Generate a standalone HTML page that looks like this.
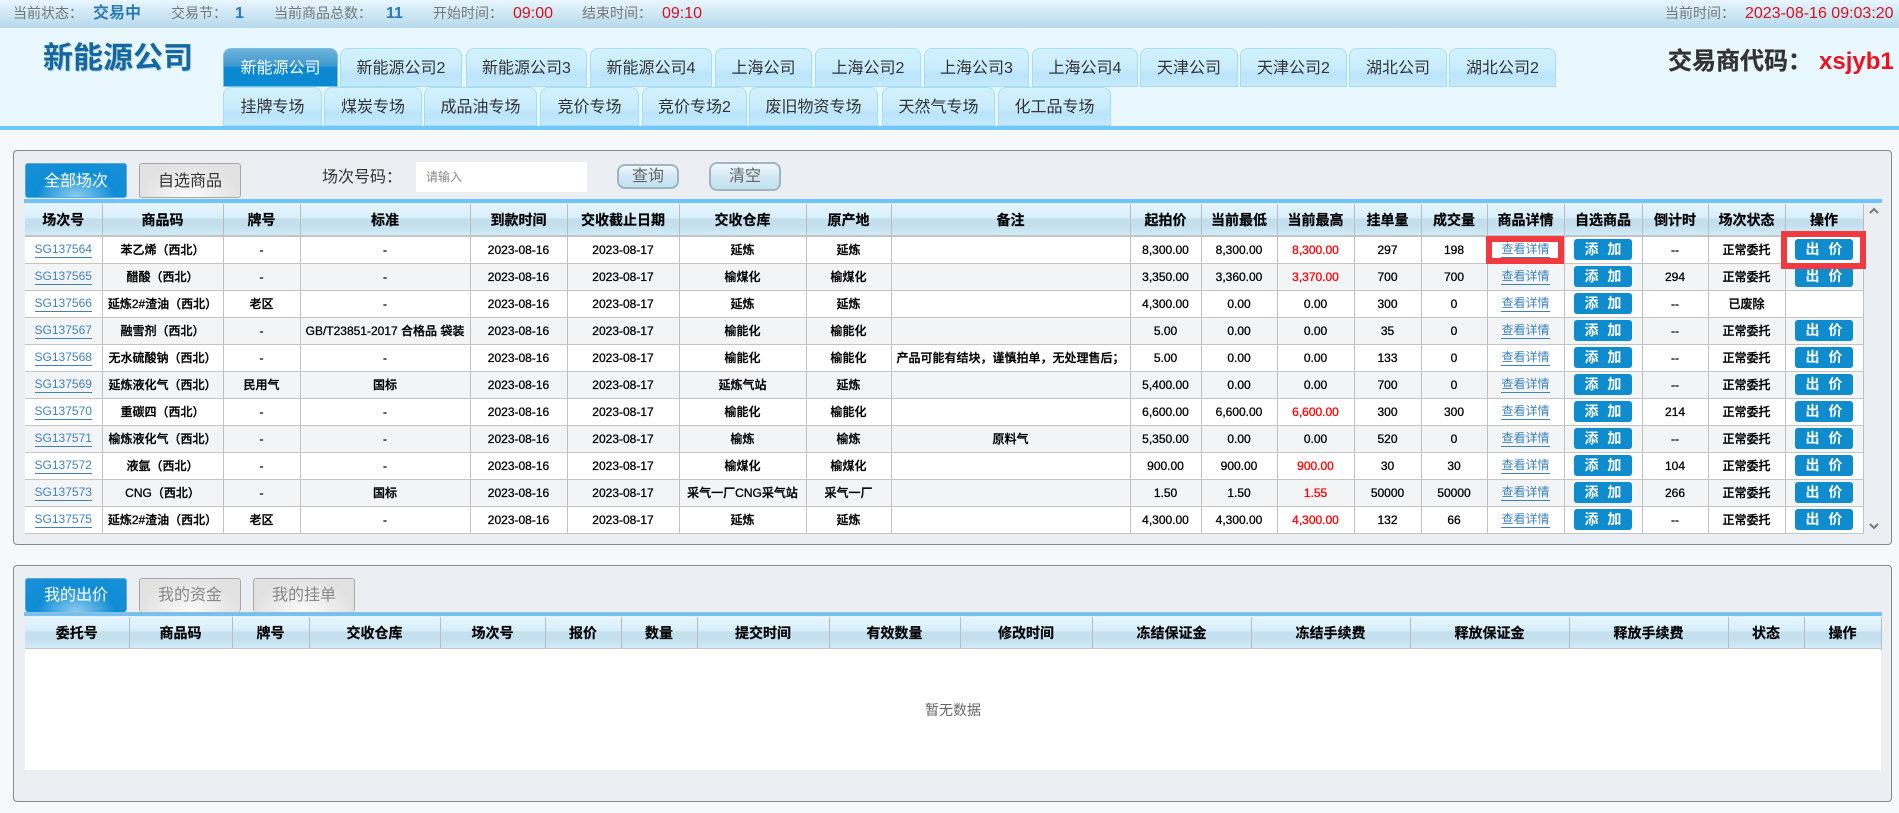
<!DOCTYPE html>
<html lang="zh"><head><meta charset="utf-8"><title>交易</title>
<style>
*{box-sizing:border-box}
html,body{margin:0;padding:0;width:1899px;height:813px;overflow:hidden;background:#f6f8fa;font-family:"Liberation Sans","Noto Sans CJK SC",sans-serif;color:#333}
.a{position:absolute;white-space:nowrap}
#top{position:absolute;left:0;top:0;width:1899px;height:28px;background:linear-gradient(#e8f6fe,#b6d9ec)}
#top span{position:absolute;top:0;line-height:27px;font-size:14px;color:#777;white-space:nowrap}
#top .b{color:#2a7ab5;font-weight:bold;font-size:16px}#top .r{color:#d9101c;font-size:16px}
#hd{position:absolute;left:0;top:28px;width:1899px;height:98px;background:#e9f8ff}
#ln{position:absolute;left:0;top:126px;width:1899px;height:4px;background:#6ec8fb}
.logo{left:43px;top:42px;font-size:30px;line-height:34px;font-weight:bold;color:#14689f;text-shadow:1px 1px 0 #b5d3e6}
.tb{position:absolute;height:39px;line-height:39px;text-align:center;font-size:16px;color:#333;border-radius:8px 8px 0 0;border:1px solid #a5dcf6;border-bottom-color:#a8dcf6;background:linear-gradient(#d3f1fe,#c9edfd 50%,#bae4fb 70%,#c6eafd)}
.tb.on{background:linear-gradient(#6fb4dc,#3b97ce 46%,#0a88d2 50%,#0b8ad4);border-color:#7cbfe3;color:#fff}
.pn{position:absolute;left:13px;width:1879px;background:#ebeef3;border:1px solid #888;border-radius:4px}
.bt{position:absolute;width:102px;height:35px;line-height:35px;text-align:center;font-size:16px;border-radius:3px;border:1px solid #a8a8a8;color:#333;background:radial-gradient(ellipse at 50% 100%,#fafafa,#e2e2e2 70%)}
.bt.on{background:radial-gradient(ellipse at 50% 100%,#8fcdee,#0e8dd6 55%,#1a90d6);border-color:#5aa8d6;color:#fff}
.bt.g{color:#888;height:34px;line-height:34px;border-bottom:0}
.bt.on.g{color:#fff}
.bl{position:absolute;background:#6cc4fa}
.sb{position:absolute;text-align:center;color:#666;font-size:16px;background:linear-gradient(#f0f8fd,#cfe6f2 55%,#c2e4f1);border:2px solid #9fb5bf;border-radius:8px}
table{position:absolute;border-collapse:collapse;table-layout:fixed;background:#fff}
th{height:32px;padding:0;font-size:14px;font-weight:bold;color:#000;text-align:center;border-right:1px solid #bcbcbc;border-bottom:2px solid #c4c4c4;background:linear-gradient(#e6f6fe,#d8effb 45%,#c4dfee 48%,#c4dfee 70%,#d0ebf8);-webkit-text-stroke:.2px #000}
td{height:27px;padding:0;font-size:12px;font-weight:500;color:#000;text-align:center;white-space:nowrap;overflow:hidden;border-right:1px solid #c0c0c0;border-bottom:1px solid #c4c4c4;-webkit-text-stroke:.3px}
td a{color:#3d82bd;border-bottom:1px solid #3d82bd;display:inline-block;line-height:15px;font-weight:400;-webkit-text-stroke:0}
tr:nth-child(even) td{background:#f3f4f6}
.ad{display:block;width:58px;height:21px;line-height:21px;margin:0 auto;background:#0e8ccd;border-radius:3px;color:#fff;font-size:14px;font-weight:bold;word-spacing:5px;-webkit-text-stroke:0}
.rd{color:#f00}
.box{position:absolute;border:6px solid #f03a3f;pointer-events:none}
</style></head><body>
<div id="top">
<span style="left:13px">当前状态：</span><span class="b" style="left:93px">交易中</span>
<span style="left:171px">交易节：</span><span class="b" style="left:235px">1</span>
<span style="left:274px">当前商品总数：</span><span class="b" style="left:386px">11</span>
<span style="left:433px">开始时间：</span><span class="r" style="left:513px">09:00</span>
<span style="left:582px">结束时间：</span><span class="r" style="left:662px">09:10</span>
<span style="left:1665px">当前时间：</span><span class="r" style="left:1745px">2023-08-16 09:03:20</span>
</div>
<div id="hd"></div><div id="ln"></div>
<div class="a logo">新能源公司</div>
<div class="a" style="left:1668px;top:47px;font-size:24px;line-height:30px;font-weight:bold;color:#333;-webkit-text-stroke:.3px #333">交易商代码：</div>
<div class="a" style="left:1819px;top:47px;font-size:24px;line-height:30px;font-weight:bold;color:#ee1120;font-family:'Liberation Sans',sans-serif">xsjyb1</div>

<div class="tb on" style="left:223px;top:48px;width:115px">新能源公司</div>
<div class="tb" style="left:340px;top:48px;width:122px">新能源公司2</div>
<div class="tb" style="left:466px;top:48px;width:121px">新能源公司3</div>
<div class="tb" style="left:590px;top:48px;width:122px">新能源公司4</div>
<div class="tb" style="left:715px;top:48px;width:97px">上海公司</div>
<div class="tb" style="left:815px;top:48px;width:106px">上海公司2</div>
<div class="tb" style="left:924px;top:48px;width:105px">上海公司3</div>
<div class="tb" style="left:1032px;top:48px;width:106px">上海公司4</div>
<div class="tb" style="left:1140px;top:48px;width:98px">天津公司</div>
<div class="tb" style="left:1240px;top:48px;width:107px">天津公司2</div>
<div class="tb" style="left:1349px;top:48px;width:98px">湖北公司</div>
<div class="tb" style="left:1449px;top:48px;width:107px">湖北公司2</div>

<div class="tb" style="left:223px;top:87px;width:99px">挂牌专场</div>
<div class="tb" style="left:324px;top:87px;width:98px">煤炭专场</div>
<div class="tb" style="left:424px;top:87px;width:113px">成品油专场</div>
<div class="tb" style="left:540px;top:87px;width:99px">竞价专场</div>
<div class="tb" style="left:642px;top:87px;width:105px">竞价专场2</div>
<div class="tb" style="left:749px;top:87px;width:129px">废旧物资专场</div>
<div class="tb" style="left:882px;top:87px;width:113px">天然气专场</div>
<div class="tb" style="left:998px;top:87px;width:113px">化工品专场</div>

<div class="pn" style="top:150px;height:395px"></div>
<div class="bt on" style="left:25px;top:163px">全部场次</div>
<div class="bt" style="left:139px;top:163px">自选商品</div>
<div class="a" style="left:322px;top:166px;font-size:16px;line-height:24px;color:#333">场次号码：</div>
<div class="a" style="left:416px;top:162px;width:171px;height:30px;background:#fff;line-height:30px;font-size:12px;color:#888;padding-left:10px">请输入</div>
<div class="sb" style="left:617px;top:164px;width:62px;height:25px;line-height:21px">查询</div>
<div class="sb" style="left:709px;top:162px;width:72px;height:29px;line-height:25px">清空</div>
<div class="bl" style="left:24px;top:199px;width:1858px;height:4px"></div>

<table style="left:25px;top:204px;width:1838px">
<colgroup><col style="width:77px"><col style="width:121px"><col style="width:77px"><col style="width:170px"><col style="width:97px"><col style="width:112px"><col style="width:127px"><col style="width:85px"><col style="width:239px"><col style="width:71px"><col style="width:76px"><col style="width:77px"><col style="width:67px"><col style="width:66px"><col style="width:77px"><col style="width:78px"><col style="width:66px"><col style="width:77px"><col style="width:78px"></colgroup>
<thead><tr><th>场次号</th><th>商品码</th><th>牌号</th><th>标准</th><th>到款时间</th><th>交收截止日期</th><th>交收仓库</th><th>原产地</th><th>备注</th><th>起拍价</th><th>当前最低</th><th>当前最高</th><th>挂单量</th><th>成交量</th><th>商品详情</th><th>自选商品</th><th>倒计时</th><th>场次状态</th><th>操作</th></tr></thead>
<tbody>
<tr><td><a>SG137564</a></td><td>苯乙烯（西北）</td><td>-</td><td>-</td><td>2023-08-16</td><td>2023-08-17</td><td>延炼</td><td>延炼</td><td></td><td>8,300.00</td><td>8,300.00</td><td class="rd">8,300.00</td><td>297</td><td>198</td><td><a>查看详情</a></td><td><span class="ad">添 加</span></td><td>--</td><td>正常委托</td><td><span class="ad">出 价</span></td></tr>
<tr><td><a>SG137565</a></td><td>醋酸（西北）</td><td>-</td><td>-</td><td>2023-08-16</td><td>2023-08-17</td><td>榆煤化</td><td>榆煤化</td><td></td><td>3,350.00</td><td>3,360.00</td><td class="rd">3,370.00</td><td>700</td><td>700</td><td><a>查看详情</a></td><td><span class="ad">添 加</span></td><td>294</td><td>正常委托</td><td><span class="ad">出 价</span></td></tr>
<tr><td><a>SG137566</a></td><td>延炼2#渣油（西北）</td><td>老区</td><td>-</td><td>2023-08-16</td><td>2023-08-17</td><td>延炼</td><td>延炼</td><td></td><td>4,300.00</td><td>0.00</td><td>0.00</td><td>300</td><td>0</td><td><a>查看详情</a></td><td><span class="ad">添 加</span></td><td>--</td><td>已废除</td><td></td></tr>
<tr><td><a>SG137567</a></td><td>融雪剂（西北）</td><td>-</td><td>GB/T23851-2017 合格品 袋装</td><td>2023-08-16</td><td>2023-08-17</td><td>榆能化</td><td>榆能化</td><td></td><td>5.00</td><td>0.00</td><td>0.00</td><td>35</td><td>0</td><td><a>查看详情</a></td><td><span class="ad">添 加</span></td><td>--</td><td>正常委托</td><td><span class="ad">出 价</span></td></tr>
<tr><td><a>SG137568</a></td><td>无水硫酸钠（西北）</td><td>-</td><td>-</td><td>2023-08-16</td><td>2023-08-17</td><td>榆能化</td><td>榆能化</td><td>产品可能有结块，谨慎拍单，无处理售后；</td><td>5.00</td><td>0.00</td><td>0.00</td><td>133</td><td>0</td><td><a>查看详情</a></td><td><span class="ad">添 加</span></td><td>--</td><td>正常委托</td><td><span class="ad">出 价</span></td></tr>
<tr><td><a>SG137569</a></td><td>延炼液化气（西北）</td><td>民用气</td><td>国标</td><td>2023-08-16</td><td>2023-08-17</td><td>延炼气站</td><td>延炼</td><td></td><td>5,400.00</td><td>0.00</td><td>0.00</td><td>700</td><td>0</td><td><a>查看详情</a></td><td><span class="ad">添 加</span></td><td>--</td><td>正常委托</td><td><span class="ad">出 价</span></td></tr>
<tr><td><a>SG137570</a></td><td>重碳四（西北）</td><td>-</td><td>-</td><td>2023-08-16</td><td>2023-08-17</td><td>榆能化</td><td>榆能化</td><td></td><td>6,600.00</td><td>6,600.00</td><td class="rd">6,600.00</td><td>300</td><td>300</td><td><a>查看详情</a></td><td><span class="ad">添 加</span></td><td>214</td><td>正常委托</td><td><span class="ad">出 价</span></td></tr>
<tr><td><a>SG137571</a></td><td>榆炼液化气（西北）</td><td>-</td><td>-</td><td>2023-08-16</td><td>2023-08-17</td><td>榆炼</td><td>榆炼</td><td>原料气</td><td>5,350.00</td><td>0.00</td><td>0.00</td><td>520</td><td>0</td><td><a>查看详情</a></td><td><span class="ad">添 加</span></td><td>--</td><td>正常委托</td><td><span class="ad">出 价</span></td></tr>
<tr><td><a>SG137572</a></td><td>液氩（西北）</td><td>-</td><td>-</td><td>2023-08-16</td><td>2023-08-17</td><td>榆煤化</td><td>榆煤化</td><td></td><td>900.00</td><td>900.00</td><td class="rd">900.00</td><td>30</td><td>30</td><td><a>查看详情</a></td><td><span class="ad">添 加</span></td><td>104</td><td>正常委托</td><td><span class="ad">出 价</span></td></tr>
<tr><td><a>SG137573</a></td><td>CNG（西北）</td><td>-</td><td>国标</td><td>2023-08-16</td><td>2023-08-17</td><td>采气一厂CNG采气站</td><td>采气一厂</td><td></td><td>1.50</td><td>1.50</td><td class="rd">1.55</td><td>50000</td><td>50000</td><td><a>查看详情</a></td><td><span class="ad">添 加</span></td><td>266</td><td>正常委托</td><td><span class="ad">出 价</span></td></tr>
<tr><td><a>SG137575</a></td><td>延炼2#渣油（西北）</td><td>老区</td><td>-</td><td>2023-08-16</td><td>2023-08-17</td><td>延炼</td><td>延炼</td><td></td><td>4,300.00</td><td>4,300.00</td><td class="rd">4,300.00</td><td>132</td><td>66</td><td><a>查看详情</a></td><td><span class="ad">添 加</span></td><td>--</td><td>正常委托</td><td><span class="ad">出 价</span></td></tr>
</tbody></table>
<svg class="a" style="left:1869px;top:207px" width="10" height="8"><path d="M1 6L5 2L9 6" fill="none" stroke="#777" stroke-width="2"/></svg>
<svg class="a" style="left:1869px;top:522px" width="10" height="8"><path d="M1 2L5 6L9 2" fill="none" stroke="#777" stroke-width="2"/></svg>
<div class="box" style="left:1486px;top:236px;width:78px;height:28px"></div>
<div class="box" style="left:1781px;top:231px;width:85px;height:38px"></div>

<div class="pn" style="top:565px;height:237px"></div>
<div class="bt on g" style="left:25px;top:578px">我的出价</div>
<div class="bt g" style="left:139px;top:578px">我的资金</div>
<div class="bt g" style="left:253px;top:578px">我的挂单</div>
<div class="bl" style="left:24px;top:612px;width:1858px;height:4px;border-top:1px solid #a8b8c2"></div>
<table style="left:25px;top:617px;width:1856px">
<colgroup><col style="width:104px"><col style="width:103px"><col style="width:77px"><col style="width:131px"><col style="width:105px"><col style="width:76px"><col style="width:76px"><col style="width:132px"><col style="width:131px"><col style="width:132px"><col style="width:159px"><col style="width:159px"><col style="width:159px"><col style="width:159px"><col style="width:76px"><col style="width:77px"></colgroup>
<thead><tr><th>委托号</th><th>商品码</th><th>牌号</th><th>交收仓库</th><th>场次号</th><th>报价</th><th>数量</th><th>提交时间</th><th>有效数量</th><th>修改时间</th><th>冻结保证金</th><th>冻结手续费</th><th>释放保证金</th><th>释放手续费</th><th>状态</th><th>操作</th></tr></thead>
</table>
<div class="a" style="left:25px;top:649px;width:1856px;height:121px;background:#fff"></div>
<div class="a" style="left:925px;top:700px;font-size:14px;line-height:20px;color:#666">暂无数据</div>
</body></html>
